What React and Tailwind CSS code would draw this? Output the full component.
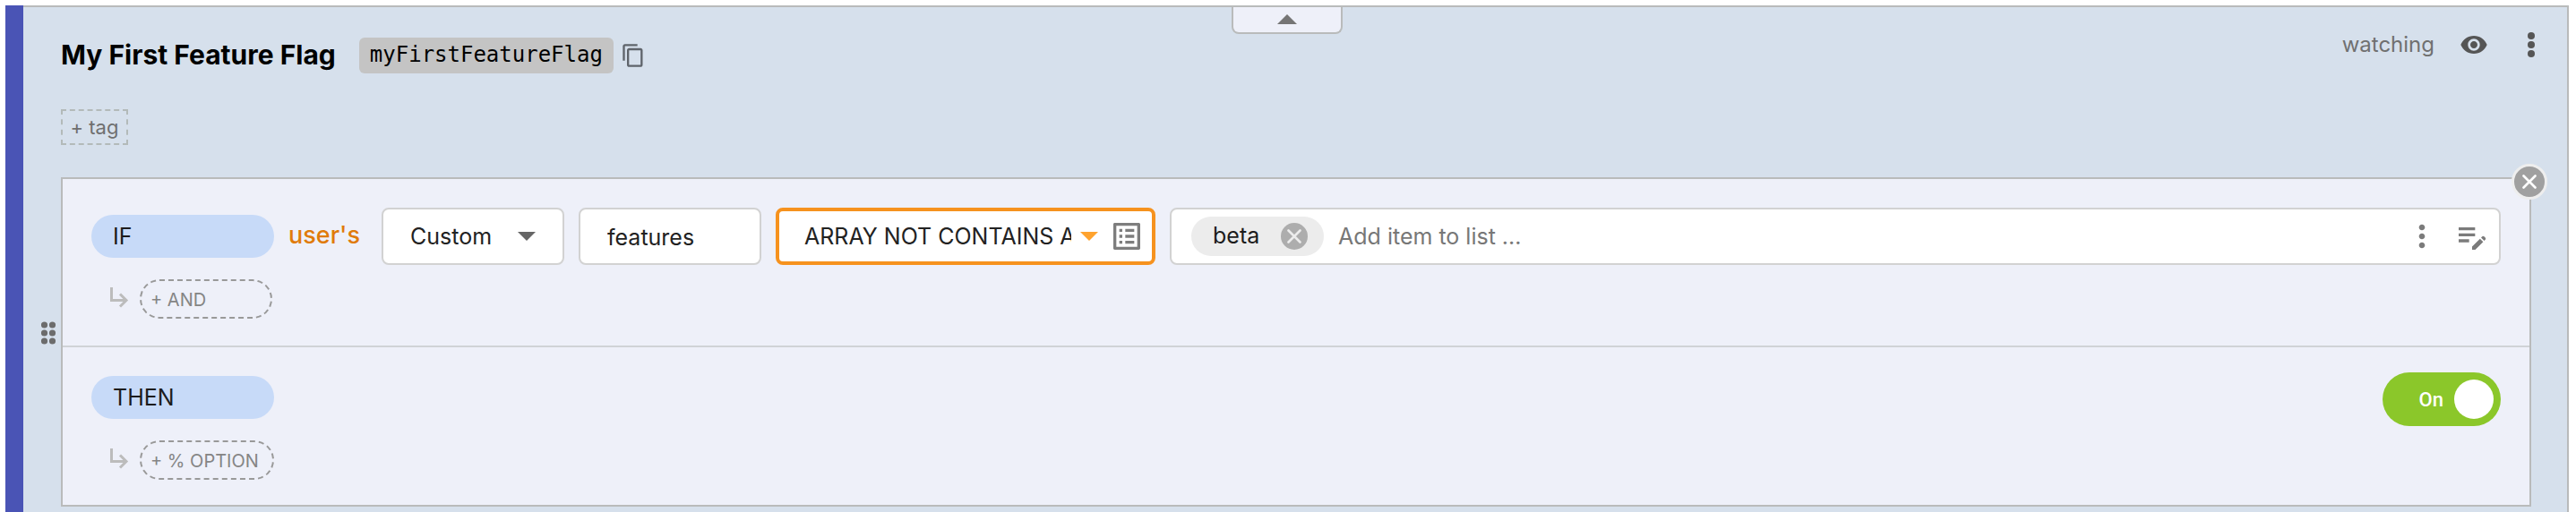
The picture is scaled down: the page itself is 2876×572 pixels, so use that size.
import React, { useState } from 'react';
import { MdContentCopy, MdVisibility, MdMoreVert, MdOutlineListAlt, MdEditNote } from 'react-icons/md';

const Caret = ({ className }) => (
  <svg viewBox="0 0 20 10" className={className} aria-hidden="true">
    <path d="M0 0h20L10 10z" fill="currentColor" />
  </svg>
);

const Cross = ({ className }) => (
  <svg viewBox="0 0 16 16" className={className} aria-hidden="true">
    <path d="M1.5 1.5l13 13M14.5 1.5l-13 13" fill="none" stroke="currentColor" strokeWidth="2.6" strokeLinecap="round" />
  </svg>
);

const Keyword = ({ children }) => (
  <span className="flex h-12 w-[204px] shrink-0 items-center rounded-full bg-[#c7daf8] pt-0.5 pl-6 text-[25px] text-[#1c1c1c]">
    {children}
  </span>
);

const AddRow = ({ children, className }) => (
  <div className="mt-4 flex items-start gap-1.5 pl-4">
    <svg viewBox="0 0 32 32" className="mt-1 size-8 text-[#bcbcbc]" fill="none" stroke="currentColor" strokeWidth="3" aria-hidden="true">
      <path d="M6.5 5v14.5H23M16 12.5l7 7-7 7" />
    </svg>
    <button className={`h-11 rounded-full border-2 border-dashed border-[#999] pt-0.5 pl-2.5 text-left text-xl text-[#858585] ${className}`}>
      {children}
    </button>
  </div>
);

function Header() {
  return (
    <header className="flex items-start justify-between pt-[22px] pr-5 pl-[42px]">
      <div className="mt-3">
        <div className="flex h-10 items-center">
          <h1 className="pb-0.5 text-[30px] leading-9 font-bold text-black">My First Feature Flag</h1>
          <code className="ml-[26px] flex h-10 items-center rounded-md bg-[#c4c4c4] px-3 pb-0.5 font-['DejaVu_Sans_Mono',monospace] text-2xl text-black">
            myFirstFeatureFlag
          </code>
          <button aria-label="Copy key" className="ml-2 text-[#5f646b]">
            <MdContentCopy className="size-7" />
          </button>
        </div>
        <button className="mt-10 block h-10 w-[75px] border-2 border-dashed border-[#b3bab9] text-center text-[22px] leading-9 text-[#6f6f6f]">
          + tag
        </button>
      </div>
      <div className="flex h-10 items-center gap-7 text-[#555]">
        <span className="text-2xl text-[#707070]">watching</span>
        <button aria-label="Watch flag">
          <MdVisibility className="size-8" />
        </button>
        <button aria-label="Flag menu">
          <svg viewBox="0 0 40 40" className="size-10" fill="currentColor">
            <circle cx="20" cy="10" r="4" />
            <circle cx="20" cy="20" r="4" />
            <circle cx="20" cy="30" r="4" />
          </svg>
        </button>
      </div>
    </header>
  );
}

function Condition() {
  return (
    <section className="border-b-2 border-[#d0d3d6] px-8 pt-8 pb-[30px]">
      <div className="flex items-center gap-4">
        <Keyword>IF</Keyword>
        <span className="w-[88px] shrink-0 pb-0.5 text-[27px] leading-10 font-medium text-[#e07b0a]">user's</span>

        <div className="flex h-16 w-[204px] shrink-0 items-center rounded-lg border-2 border-[#d2d2d2] bg-white px-[30px]">
          <select aria-label="Trait" defaultValue="Custom" className="min-w-0 flex-1 appearance-none pt-0.5 text-[25px] text-[#222] outline-none">
            <option>Custom</option>
          </select>
          <Caret className="h-2.5 w-5 text-[#666]" />
        </div>

        <input
          aria-label="Trait name"
          defaultValue="features"
          className="h-16 w-[204px] shrink-0 rounded-lg border-2 border-[#d2d2d2] bg-white px-[30px] pt-0.5 text-[25px] text-[#222] outline-none"
        />

        <div className="flex h-16 w-[424px] shrink-0 items-center rounded-lg border-4 border-[#f6921e] bg-white pr-2 pl-7">
          <select aria-label="Operator" defaultValue="ARRAY NOT CONTAINS ANY" className="min-w-0 flex-1 appearance-none overflow-hidden pt-0.5 text-[25px] text-[#222] outline-none">
            <option>ARRAY NOT CONTAINS ANY</option>
          </select>
          <Caret className="ml-2.5 h-2.5 w-5 text-[#ffa32e]" />
          <button aria-label="Pick from list" className="ml-3 text-[#7d7d7d]">
            <MdOutlineListAlt className="size-10" />
          </button>
        </div>

        <div className="flex h-16 min-w-0 flex-1 items-center rounded-lg border-2 border-[#d2d2d2] bg-white pr-2.5 pl-[22px]">
          <span className="flex h-11 w-[148px] shrink-0 items-center justify-between rounded-full bg-[#ececec] pr-[18px] pl-6 text-[25px] text-[#1c1c1c]">
            beta
            <button aria-label="Remove beta" className="grid size-[30px] place-items-center rounded-full bg-[#adadad] text-[#ececec]">
              <Cross className="size-4" />
            </button>
          </span>
          <input
            aria-label="Add item"
            placeholder="Add item to list ..."
            className="ml-4 min-w-0 flex-1 pt-0.5 text-[25px] outline-none placeholder:text-[#777]"
          />
          <button aria-label="List menu" className="text-[#7b7b7b]">
            <MdMoreVert className="size-10" />
          </button>
          <button aria-label="Edit list" className="ml-4 text-[#7b7b7b]">
            <MdEditNote className="size-10" />
          </button>
        </div>
      </div>
      <AddRow className="w-[148px]">+ AND</AddRow>
    </section>
  );
}

function Outcome() {
  const [on, setOn] = useState(true);

  return (
    <section className="px-8 py-7">
      <div className="flex items-start justify-between">
        <div className="pt-1">
          <Keyword>THEN</Keyword>
        </div>
        <label className={`flex h-[60px] w-[132px] items-center justify-end gap-3 rounded-full pr-2 font-[Roboto,sans-serif] text-[22px] font-medium text-white ${on ? 'bg-[#8bc72a]' : 'bg-[#9f9f9f]'}`}>
          {on ? 'On' : 'Off'}
          <input
            type="checkbox"
            checked={on}
            onChange={(e) => setOn(e.target.checked)}
            className="size-11 appearance-none rounded-full bg-white"
          />
        </label>
      </div>
      <AddRow className="w-[150px]">+ % OPTION</AddRow>
    </section>
  );
}

function App() {
  return (
    <div className="min-h-screen bg-white pt-1.5 pr-2 pl-1.5 font-[Inter,sans-serif]">
      <div className="relative flex min-h-[calc(100vh-6px)]">
        <div className="w-5 shrink-0 bg-[#4a54b5]" />
        <div className="min-w-0 flex-1 border-t-2 border-r-2 border-[#b9bbbb] bg-[#d6e0ec]">
          <Header />
          <div className="mt-9 flex pr-10">
            <div className="flex w-[42px] shrink-0 items-center justify-end pr-1.5 pb-5">
              <svg viewBox="0 0 16 26" className="h-[26px] w-4 text-[#6c6c6c]" fill="currentColor" aria-label="Drag rule">
                {[4, 13, 22].map((y) => (
                  <g key={y}>
                    <circle cx="3.5" cy={y} r="3.6" />
                    <circle cx="12.5" cy={y} r="3.6" />
                  </g>
                ))}
              </svg>
            </div>
            <div className="relative min-w-0 flex-1 border-2 border-[#b9bbbb] bg-[#eef0f9]">
              <Condition />
              <Outcome />
              <button aria-label="Delete rule" className="absolute -top-[17px] -right-5 grid size-10 place-items-center rounded-full border-3 border-[#eee] bg-[#a0a0a0] text-white">
                <Cross className="size-4" />
              </button>
            </div>
          </div>
        </div>

        {/* collapse tab */}
        <button
          aria-label="Collapse"
          className="absolute top-0.5 left-1/2 flex h-[30px] w-[124px] -translate-x-1/2 justify-center rounded-b-lg border-x-2 border-b-2 border-[#b9bbbb] bg-[#eef0f9] pt-2 text-[#757575]"
        >
          <Caret className="h-[11px] w-[22px] rotate-180" />
        </button>
      </div>
    </div>
  );
}

export default App;
